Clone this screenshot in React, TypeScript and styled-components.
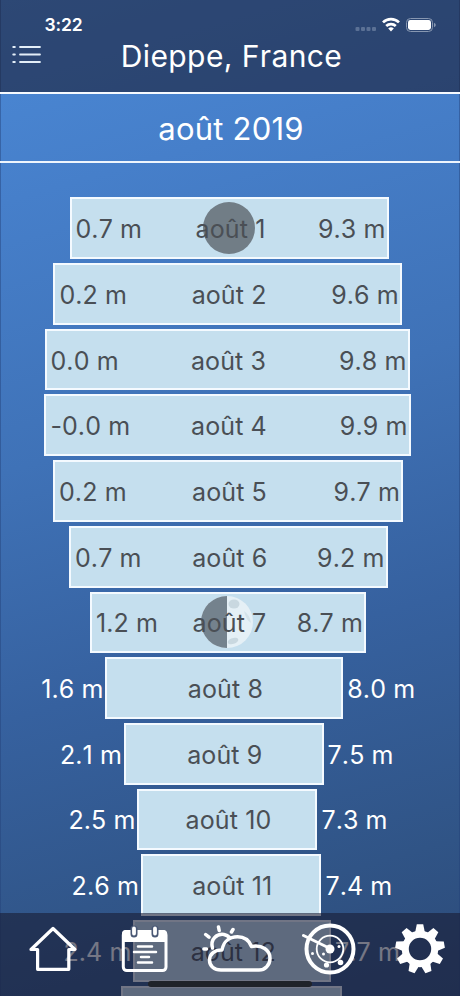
import React from "react";
import styled, { createGlobalStyle } from "styled-components";

const GlobalStyle = createGlobalStyle`
  * { box-sizing: border-box; }
  html, body { margin: 0; padding: 0; overflow: hidden; }
`;

const Screen = styled.main`
  position: relative;
  width: 460px;
  height: 996px;
  overflow: hidden;
  font-family: Inter, "Liberation Sans", sans-serif;
  font-kerning: none;
  color: #fff;
  background: linear-gradient(164deg, #4b89d6 0%, #467fca 18%, #3f72b7 42%, #36619f 64%, #305486 86%, #2c4a78 100%);
  box-shadow: inset 1px 0 rgba(35, 65, 120, 0.45), inset -1px 0 rgba(35, 65, 120, 0.45);
`;

const Header = styled.header`
  height: 94px;
  background: rgba(25, 28, 52, 0.6);
  border-bottom: 2px solid #f6faff;
`;

const StatusBar = styled.div`
  display: flex;
  align-items: center;
  justify-content: space-between;
  height: 40px;
  padding: 10px 24px 0 44.5px;
`;

const Clock = styled.span`
  font-size: 17.5px;
  line-height: 20px;
  font-weight: 600;
  letter-spacing: -0.1px;
`;

const TitleRow = styled.div`
  display: grid;
  grid-template-columns: 52px 1fr 49px;
  align-items: center;
  height: 32px;
`;

const MenuButton = styled.button`
  width: 52px;
  height: 32px;
  padding: 0;
  border: 0;
  background: none;
  display: block;
`;

const Title = styled.h1`
  margin: 0;
  text-align: center;
  white-space: nowrap;
  font-size: 30px;
  line-height: 32px;
  font-weight: 400;
  letter-spacing: 0.4px;
`;

const Month = styled.h2`
  margin: 0;
  height: 69px;
  padding-left: 2px;
  border-bottom: 2px solid #eef5fd;
  text-align: center;
  font-size: 31px;
  line-height: 69px;
  font-weight: 400;
  letter-spacing: 0.2px;
`;

const TideList = styled.section`
  display: flex;
  flex-direction: column;
  gap: 4px;
  padding-top: 34.4px;
`;

const TideRow = styled.div<{ $start: number; $width: number }>`
  display: grid;
  grid-template-columns: ${(p) => p.$start}px ${(p) => p.$width}px 1fr;
  align-items: center;
  flex: none;
  height: 61.7px;
  font-size: 25px;
  font-weight: 400;
  line-height: 30px;
  white-space: nowrap;
  letter-spacing: 0.1px;
`;

const OutsideLabel = styled.span<{ $side: "low" | "high" }>`
  text-align: ${(p) => (p.$side === "low" ? "right" : "left")};
  padding: ${(p) => (p.$side === "low" ? "2px 1.5px 0 0" : "2px 0 0 4px")};
`;

const Bar = styled.div`
  display: grid;
  grid-template-columns: 1fr auto 1fr;
  align-items: center;
  height: 100%;
  padding: 2px 1.5px 0 4px;
  border: 2px solid #f4faff;
  background: #c5dfee;
  color: #4a4f55;
`;

const BarLabel = styled.span<{ $end?: boolean }>`
  text-align: ${(p) => (p.$end ? "right" : "left")};
`;

const Day = styled.span`
  position: relative;
`;

const DayName = styled.span`
  position: relative;
`;

const MoonIcon = styled.svg`
  position: absolute;
  left: 50%;
  top: 50%;
  width: 52px;
  height: 52px;
  margin: -27px 0 0 -28px;
`;

const TabBar = styled.nav`
  position: absolute;
  left: 0;
  right: 0;
  bottom: 0;
  height: 83px;
  display: grid;
  grid-template-columns: 105px 80px 105px 80px 100px;
  background: rgba(25, 28, 52, 0.6);
`;

const Tab = styled.button`
  padding: 0;
  border: 0;
  height: 71px;
  background: none;
  display: flex;
  align-items: center;
  justify-content: center;
`;

const HomeIndicator = styled.div`
  position: absolute;
  left: 148px;
  bottom: 9px;
  width: 164px;
  height: 6px;
  border-radius: 3px;
  background: #202329;
`;

const NextBar = styled.div`
  flex: none;
  width: 221px;
  height: 61.7px;
  margin-left: 121px;
  border: 2px solid #f4faff;
  background: #c5dfee;
`;

type Phase = "new" | "quarter";
interface Tide {
  day: number;
  low: string;
  high: string;
  start: number;
  end: number;
  outside?: boolean;
  moon?: Phase;
}

const tides: Tide[] = [
  { day: 1, low: "0.7", high: "9.3", start: 69.5, end: 389, moon: "new" },
  { day: 2, low: "0.2", high: "9.6", start: 53.4, end: 402.3 },
  { day: 3, low: "0.0", high: "9.8", start: 44.5, end: 410 },
  { day: 4, low: "-0.0", high: "9.9", start: 44.4, end: 411 },
  { day: 5, low: "0.2", high: "9.7", start: 53, end: 403.4 },
  { day: 6, low: "0.7", high: "9.2", start: 69, end: 388 },
  { day: 7, low: "1.2", high: "8.7", start: 90, end: 366.4, moon: "quarter" },
  { day: 8, low: "1.6", high: "8.0", start: 105, end: 343.3, outside: true },
  { day: 9, low: "2.1", high: "7.5", start: 123.5, end: 323.6, outside: true },
  { day: 10, low: "2.5", high: "7.3", start: 137, end: 317.4, outside: true },
  { day: 11, low: "2.6", high: "7.4", start: 140.5, end: 321.4, outside: true },
  { day: 12, low: "2.4", high: "7.7", start: 133, end: 331, outside: true },
];

function Moon({ phase }: { phase: Phase }) {
  return (
    <MoonIcon viewBox="0 0 52 52">
      {phase === "new" ? (
        <circle cx="26" cy="26" r="26" fill="#717d86" />
      ) : (
        <>
          <circle cx="26" cy="26" r="26" fill="#e5f0f6" />
          <ellipse cx="33" cy="8" rx="5.5" ry="4.5" fill="#c9d8e0" />
          <ellipse cx="32" cy="45" rx="5.5" ry="3" fill="#c9d8e0" transform="rotate(-18 32 45)" />
          <path d="M43 15q6 4 7 12-5-3-7-12" fill="#d4e3ea" />
          <path d="M26 0a26 26 0 0 0 0 52z" fill="#74828d" />
        </>
      )}
    </MoonIcon>
  );
}

function Row({ tide }: { tide: Tide }) {
  const { day, low, high, start, end, outside, moon } = tide;
  return (
    <TideRow $start={start} $width={end - start}>
      <OutsideLabel $side="low">{outside && `${low} m`}</OutsideLabel>
      <Bar>
        <BarLabel>{!outside && `${low} m`}</BarLabel>
        <Day>
          {moon && <Moon phase={moon} />}
          <DayName>août {day}</DayName>
        </Day>
        <BarLabel $end>{!outside && `${high} m`}</BarLabel>
      </Bar>
      <OutsideLabel $side="high">{outside && `${high} m`}</OutsideLabel>
    </TideRow>
  );
}

const StatusIcons = () => (
  <svg width="82" height="16" viewBox="0 0 82 16">
    <g fill="#5b7195">
      <rect x="1.500" y="10" width="4" height="4" rx="1" />
      <rect x="7" y="10" width="4" height="4" rx="1" />
      <rect x="12.500" y="10" width="4" height="4" rx="1" />
      <rect x="18" y="10" width="4" height="4" rx="1" />
    </g>
    <g fill="none" stroke="#fff" strokeWidth="2.7">
      <path d="M29 5.4a11.5 11.5 0 0 1 16 0" />
      <path d="M32.200 9a7 7 0 0 1 9.6 0" />
    </g>
    <path d="M34.200 11.4a4.2 4.2 0 0 1 5.6 0l-2.8 3z" fill="#fff" />
    <rect x="52.5" y="1.5" width="26" height="13" rx="4" fill="none" stroke="#8797b1" />
    <rect x="54" y="3" width="23" height="10" rx="2.4" fill="#fff" />
    <path d="M80 5.7q1.8.7 1.8 2.3T80 10.3z" fill="#8797b1" />
  </svg>
);

const ListIcon = () => (
  <svg width="52" height="32" viewBox="0 0 52 32">
    <g stroke="#e3eef8" strokeWidth="1.8" strokeLinecap="round">
      <path d="M20 7h20M20 14.5h20M20 22h20M13.2 7h1.7M13.2 14.5h1.7M13.2 22h1.7" />
    </g>
  </svg>
);

const HomeIcon = () => (
  <svg width="50" height="48" viewBox="0 0 50 48">
    <path d="M25 3.5 47 24.5h-6.2v19.8H9.6V24.5H3z" fill="none" stroke="#fff" strokeWidth="3.2" strokeLinejoin="round" />
  </svg>
);

const CalendarIcon = () => (
  <svg width="48" height="48" viewBox="0 0 48 48">
    <rect x="2.3" y="6.6" width="42.7" height="39" rx="3.5" fill="none" stroke="#fff" strokeWidth="3" />
    <path d="M1 17V8.500a3.500 3.500 0 0 1 3.500-3.500h38a3.500 3.500 0 0 1 3.500 3.500V17z" fill="#fff" />
    <g stroke="#4a5875" strokeWidth="7" strokeLinecap="round">
      <path d="M13 4v5M34 4v5" />
    </g>
    <g stroke="#fff" strokeLinecap="round">
      <path d="M13 3.500v5M34 3.500v5" strokeWidth="3.800" />
      <path d="M17 21.500h14M13 27h22M20 32h8M17 37.500h14" strokeWidth="2.500" />
    </g>
  </svg>
);

const WeatherIcon = () => (
  <svg width="72" height="48" viewBox="0 0 72 48">
    <g fill="none" stroke="#fff" strokeWidth="3.500" strokeLinecap="round" strokeLinejoin="round">
      <path d="M10.500 23C8 14 15 8.500 22 9.500q3.500.7 5.500 3" />
      <path d="m16.500 2 .7 3.500M31 4.500 29.500 7M3.700 9.500l3.300 2.600M1.900 24h2.600" />
      <path d="M19 45c-7 0-11.500-4-11.500-10S13 24.500 20 25C21.500 16 28 11.800 35.500 11.800c8 0 12 4.500 14 9.700C60 19.500 68 25 68 33.500 68 40 63 45 57 45z" />
    </g>
  </svg>
);

const RadarIcon = () => (
  <svg width="56" height="54" viewBox="0 0 56 54">
    <circle cx="28" cy="27" r="23.500" fill="none" stroke="#fff" strokeWidth="4" />
    <circle cx="28" cy="27" r="13.300" fill="none" stroke="#fff" strokeWidth="1.800" />
    <path d="M1.500 13.500 28 26.500" stroke="#fff" strokeWidth="3" strokeLinecap="round" />
    <g fill="#fff">
      <circle cx="28" cy="27" r="4.500" />
      <circle cx="24.500" cy="43" r="2.600" />
      <circle cx="38.500" cy="40.500" r="2.800" />
      <circle cx="10.500" cy="31.500" r="1.500" />
      <circle cx="21.500" cy="32" r="1.500" />
      <circle cx="37" cy="24.500" r="1.500" />
    </g>
  </svg>
);

const teeth = Array.from({ length: 9 }, (_, i) => i * 40);

const GearIcon = () => (
  <svg width="52" height="52" viewBox="-26 -26 52 52">
    <circle r="14.700" fill="none" stroke="#fff" strokeWidth="7" />
    {teeth.map((angle) => (
      <path key={angle} d="M-5-16-3.200-24.700H3.200L5-16z" fill="#fff" transform={`rotate(${angle})`} />
    ))}
  </svg>
);

export default function App() {
  return (
    <Screen>
      <GlobalStyle />
      <Header>
        <StatusBar>
          <Clock>3:22</Clock>
          <StatusIcons />
        </StatusBar>
        <TitleRow>
          <MenuButton aria-label="Menu">
            <ListIcon />
          </MenuButton>
          <Title>Dieppe, France</Title>
        </TitleRow>
      </Header>
      <Month>août 2019</Month>
      <TideList>
        {tides.map((tide) => (
          <Row key={tide.day} tide={tide} />
        ))}
        <NextBar />
      </TideList>
      <TabBar>
        <Tab aria-label="Accueil"><HomeIcon /></Tab>
        <Tab aria-label="Calendrier"><CalendarIcon /></Tab>
        <Tab aria-label="Météo"><WeatherIcon /></Tab>
        <Tab aria-label="Radar"><RadarIcon /></Tab>
        <Tab aria-label="Réglages"><GearIcon /></Tab>
      </TabBar>
      <HomeIndicator />
    </Screen>
  );
}
